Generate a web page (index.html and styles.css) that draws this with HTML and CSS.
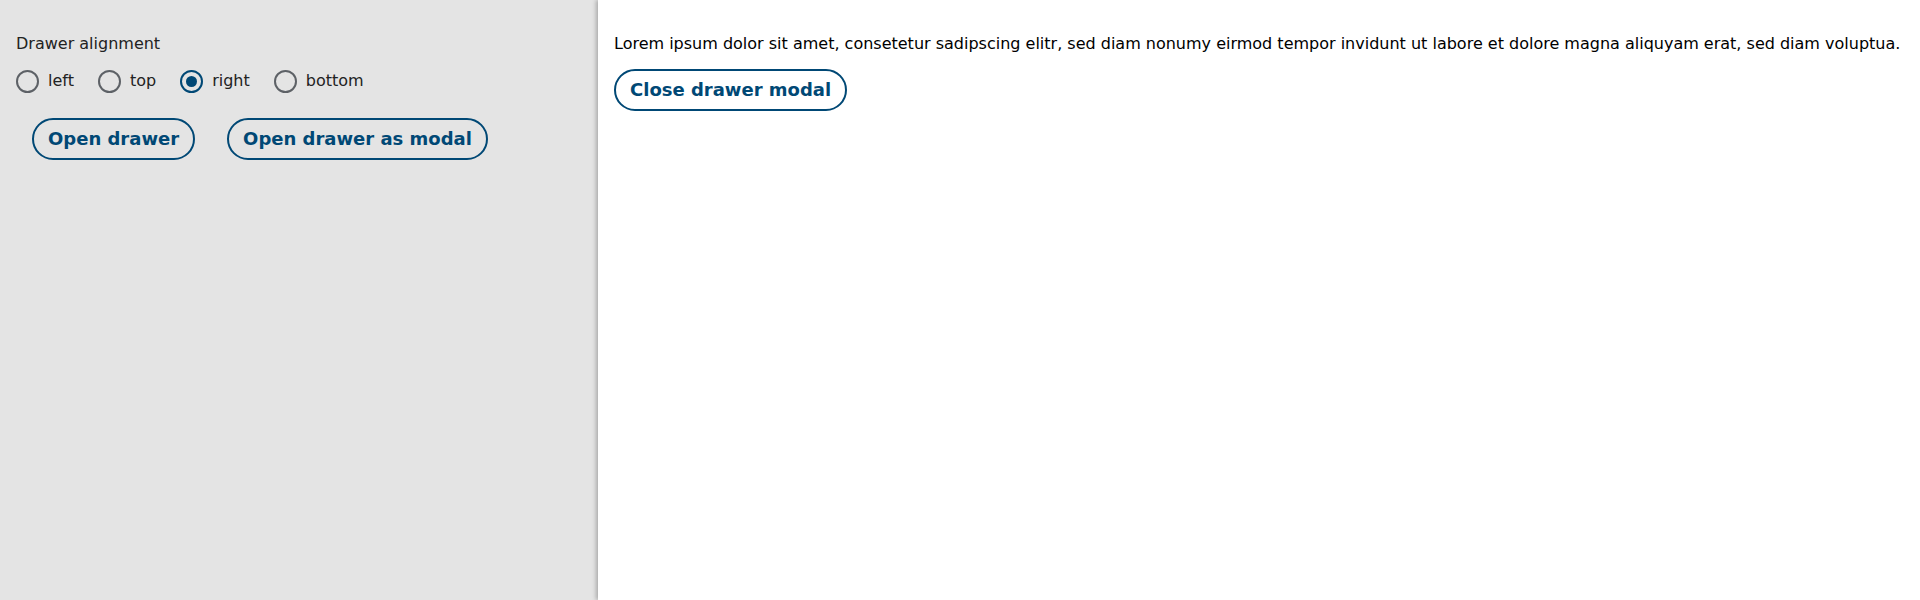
FILE: index.html
```html
<!DOCTYPE html>
<html lang="en">
<head>
<meta charset="utf-8">
<title>Drawer demo</title>
<link rel="stylesheet" href="styles.css">
</head>
<body>
<div class="page">
  <main class="main">
    <div class="field-label">Drawer alignment</div>
    <div class="radio-group" role="radiogroup">
      <label class="radio"><span class="radio-circle"></span><span>left</span></label>
      <label class="radio"><span class="radio-circle"></span><span>top</span></label>
      <label class="radio"><span class="radio-circle checked"></span><span>right</span></label>
      <label class="radio"><span class="radio-circle"></span><span>bottom</span></label>
    </div>
    <div class="actions">
      <button class="btn">Open drawer</button>
      <button class="btn">Open drawer as modal</button>
    </div>
  </main>
  <aside class="drawer">
    <p class="drawer-text">Lorem ipsum dolor sit amet, consetetur sadipscing elitr, sed diam nonumy eirmod tempor invidunt ut labore et dolore magna aliquyam erat, sed diam voluptua.</p>
    <div class="drawer-actions">
      <button class="btn btn-close">Close drawer modal</button>
    </div>
  </aside>
</div>
</body>
</html>
```
FILE: styles.css
```css
html, body {
  margin: 0;
  padding: 0;
  height: 100%;
}
body {
  font-family: "DejaVu Sans", Verdana, sans-serif;
  font-size: 16px;
  color: #222;
  background: #e4e4e4;
}
.page {
  display: flex;
  height: 600px;
  overflow: hidden;
}
.main {
  width: 598px;
  flex: none;
  box-sizing: border-box;
  padding: 34px 16px 0 16px;
  background: #e4e4e4;
}
.field-label {
  line-height: 19px;
  color: #222;
}
.radio-group {
  display: flex;
  gap: 24px;
  margin-top: 16px;
}
.radio {
  display: inline-flex;
  align-items: center;
  gap: 9px;
  line-height: 24px;
  color: #222;
}
.radio-circle {
  width: 23px;
  height: 23px;
  box-sizing: border-box;
  border: 2px solid #5d6166;
  border-radius: 50%;
  display: inline-flex;
  align-items: center;
  justify-content: center;
}
.radio-circle.checked {
  border-color: #004875;
}
.radio-circle.checked::after {
  content: "";
  width: 11px;
  height: 11px;
  border-radius: 50%;
  background: #004875;
}
.actions {
  display: flex;
  margin-top: 25px;
}
.btn {
  font-family: "DejaVu Sans", Verdana, sans-serif;
  font-weight: bold;
  font-size: 18px;
  line-height: 22px;
  color: #004875;
  background: #fff;
  border: 2px solid #004875;
  border-radius: 999px;
  padding: 8px 14px;
  margin: 0 16px;
  cursor: pointer;
}
.main .btn {
  background: #e4e4e4;
}
.drawer {
  flex: 1;
  background: #fff;
  box-shadow: -2px 0 4px rgba(0, 0, 0, 0.25);
  padding: 34px 16px 0 16px;
  position: relative;
  z-index: 1;
}
.drawer-text {
  margin: 0;
  line-height: 19px;
  color: #000;
  white-space: nowrap;
}
.drawer-actions {
  margin-top: 16px;
}
.btn-close {
  margin: 0;
}
```
